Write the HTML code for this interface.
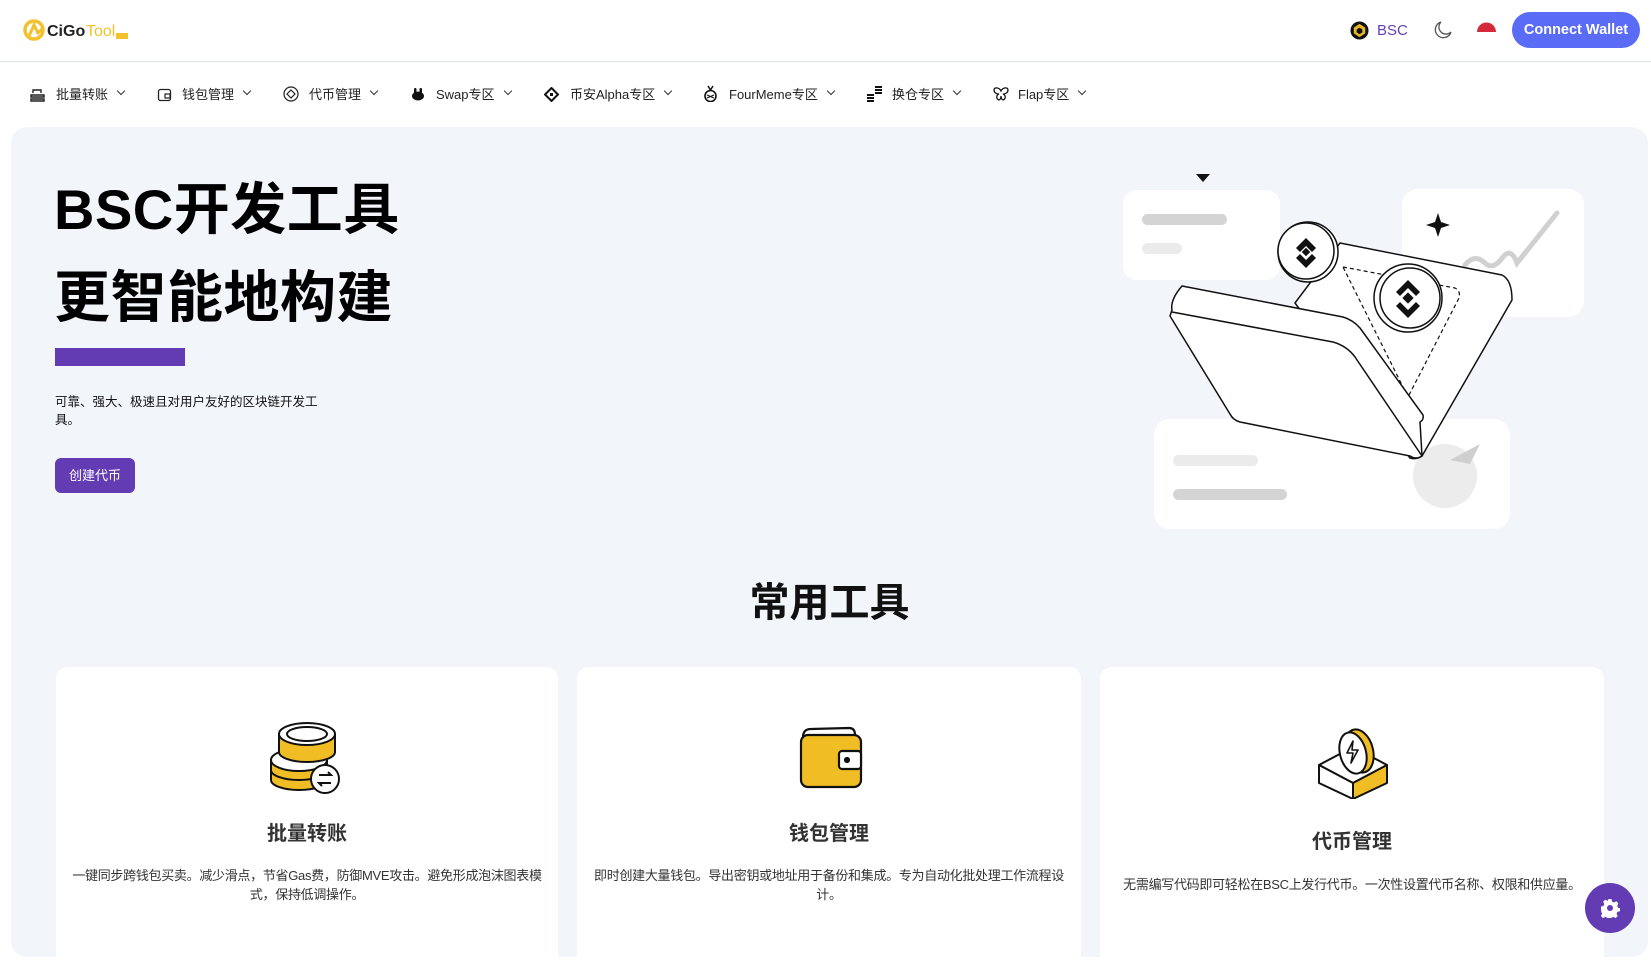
<!DOCTYPE html>
<html><head><meta charset="utf-8"><style>
*{margin:0;padding:0;box-sizing:border-box}
body{width:1651px;height:947px;overflow:hidden;background:#fff;font-family:"Liberation Sans","Noto Sans CJK SC",sans-serif;color:#111;position:relative}
.abs{position:absolute}
.hdr{position:absolute;left:0;top:0;width:1651px;height:62px;border-bottom:1px solid #dfe4ea}
.nav{position:absolute;top:83px;height:20px;display:flex;align-items:center;font-size:13px;color:#222;white-space:nowrap}
.chev{display:inline-block;width:6px;height:6px;border-right:1.3px solid #333;border-bottom:1.3px solid #333;transform:rotate(45deg);margin-left:10px;margin-top:-4px}
.hero{position:absolute;left:11px;top:127px;width:1637px;height:830px;background:#f2f5fa;border-radius:16px}
.card{position:absolute;top:667px;height:300px;background:#fff;border-radius:12px;text-align:center}
.card h3{position:absolute;left:0;right:0;font-size:20px;font-weight:bold;color:#333}
.card p{position:absolute;left:12px;right:12px;font-size:13px;line-height:19px;color:#333;letter-spacing:-0.3px}
</style></head><body>
<div class="hdr"></div>
<svg class="abs" style="left:23px;top:18px" width="110" height="24" viewBox="0 0 110 24">
<circle cx="11" cy="12" r="9" fill="none" stroke="#f2c12e" stroke-width="3.5"/>
<path d="M6 18 L11 7 L15 15 L19 11" fill="none" stroke="#f2c12e" stroke-width="3"/>
<text x="24" y="18" font-family="Liberation Sans" font-size="16" font-weight="bold" fill="#222">CiGo</text>
<text x="63" y="18" font-family="Liberation Sans" font-size="16" fill="#f2c12e">Tool</text>
<rect x="93" y="15" width="12" height="6" fill="#f2c12e"/>
</svg>
<svg class="abs" style="left:1350px;top:21px" width="19" height="19" viewBox="0 0 20 20"><circle cx="10" cy="10" r="9.5" fill="#111"/><path d="M10 3l6 4v6l-6 4-6-4V7z" fill="#e8b923"/><path d="M10 7l3 2v3l-3 2-3-2V9z" fill="#111"/></svg>
<div class="abs" style="left:1377px;top:22px;font-size:15px;color:#6440b8;font-weight:500">BSC</div>
<svg class="abs" style="left:1433px;top:20px" width="20" height="20" viewBox="0 0 20 20"><path d="M8 2a8 8 0 1 0 10 10A7 7 0 0 1 8 2z" fill="none" stroke="#555" stroke-width="1.3"/></svg>
<svg class="abs" style="left:1477px;top:22px" width="19" height="10" viewBox="0 0 19 10"><path d="M0 10a9.5 9.5 0 0 1 19 0z" fill="#d42a3a"/></svg>
<div class="abs" style="left:1512px;top:12px;width:128px;height:36px;border-radius:18px;background:#5a6cf6;color:#fff;font-size:14.5px;font-weight:bold;text-align:center;line-height:37px">Connect Wallet</div>
<div class="nav" style="left:56px">批量转账<span class="chev"></span></div>
<svg class="abs" style="left:30px;top:87px" width="15" height="15" viewBox="0 0 15 15"><path d="M3 6V3h8v3M1 8h13v2H1zM1 12h13v2H1z" fill="none" stroke="#222" stroke-width="1.4"/></svg>
<div class="nav" style="left:182px">钱包管理<span class="chev"></span></div>
<svg class="abs" style="left:157px;top:87px" width="15" height="15" viewBox="0 0 15 15"><rect x="1.5" y="2.5" width="12" height="11" rx="2" fill="none" stroke="#222" stroke-width="1.3"/><rect x="8" y="7" width="5" height="4" fill="none" stroke="#222" stroke-width="1.2"/></svg>
<div class="nav" style="left:309px">代币管理<span class="chev"></span></div>
<svg class="abs" style="left:283px;top:86px" width="16" height="16" viewBox="0 0 16 16"><circle cx="8" cy="8" r="7" fill="none" stroke="#222" stroke-width="1.2"/><path d="M8 4l4 4-4 4-4-4z" fill="none" stroke="#222" stroke-width="1.2"/></svg>
<div class="nav" style="left:436px">Swap专区<span class="chev"></span></div>
<svg class="abs" style="left:411px;top:87px" width="14" height="14" viewBox="0 0 14 14"><ellipse cx="7" cy="9" rx="6" ry="4.5" fill="#111"/><rect x="3" y="1" width="2.5" height="6" rx="1.2" fill="#111"/><rect x="8.5" y="1" width="2.5" height="6" rx="1.2" fill="#111"/></svg>
<div class="nav" style="left:570px">币安Alpha专区<span class="chev"></span></div>
<svg class="abs" style="left:544px;top:87px" width="15" height="15" viewBox="0 0 15 15"><path d="M7.5 1l6.5 6.5-6.5 6.5L1 7.5z" fill="none" stroke="#111" stroke-width="2"/><rect x="6" y="6" width="3" height="3" fill="#111"/></svg>
<div class="nav" style="left:729px">FourMeme专区<span class="chev"></span></div>
<svg class="abs" style="left:704px;top:85px" width="13" height="17" viewBox="0 0 13 17"><path d="M4 1l2.5 4L9 1" fill="none" stroke="#111" stroke-width="1.5"/><ellipse cx="6.5" cy="11" rx="5.5" ry="5.5" fill="none" stroke="#111" stroke-width="1.6"/><path d="M3 10l7 3M3 13l7-3" stroke="#111"/></svg>
<div class="nav" style="left:892px">换仓专区<span class="chev"></span></div>
<svg class="abs" style="left:866px;top:85px" width="17" height="17" viewBox="0 0 17 17"><rect x="1" y="9" width="7" height="2" fill="#111"/><rect x="1" y="12" width="7" height="2" fill="#111"/><rect x="1" y="15" width="7" height="2" fill="#111"/><rect x="9" y="1" width="7" height="2" fill="#111"/><rect x="9" y="4" width="7" height="2" fill="#111"/><rect x="9" y="7" width="7" height="2" fill="#111"/></svg>
<div class="nav" style="left:1018px">Flap专区<span class="chev"></span></div>
<svg class="abs" style="left:993px;top:87px" width="16" height="14" viewBox="0 0 16 14"><path d="M8 4C6 0 1 0 1 3s3 4 5 4c-3 1-3 5 0 6 1 0 2-2 2-4 0 2 1 4 2 4 3-1 3-5 0-6 2 0 5-1 5-4S10 0 8 4z" fill="none" stroke="#111" stroke-width="1.3"/></svg>

<div class="hero"></div>
<div class="abs" style="left:54px;top:166px;font-size:56px;font-weight:bold;line-height:88px;letter-spacing:0.5px;color:#000;white-space:nowrap">BSC开发工具<br>更智能地构建</div>
<div class="abs" style="left:55px;top:348px;width:130px;height:18px;background:#633bb3"></div>
<div class="abs" style="left:55px;top:393px;width:270px;font-size:12.5px;line-height:18px;color:#111">可靠、强大、极速且对用户友好的区块链开发工具。</div>
<div class="abs" style="left:55px;top:458px;width:80px;height:35px;border-radius:6px;background:#633bb3;color:#fff;font-size:13px;text-align:center;line-height:35px">创建代币</div>

<svg class="abs" style="left:1050px;top:150px" width="540" height="380" viewBox="0 0 540 380">
<rect x="73" y="40" width="157" height="90" rx="14" fill="#fff"/>
<rect x="92" y="64" width="85" height="11" rx="5.5" fill="#d4d4d4"/>
<rect x="92" y="93" width="40" height="11" rx="5.5" fill="#ebebeb"/>
<path d="M146 24h14l-7 8z" fill="#111"/>
<rect x="352" y="39" width="182" height="128" rx="16" fill="#fff"/>
<path d="M388 63 l3 9 9 3 -9 3 -3 9 -3 -9 -9 -3 9 -3z" fill="#111"/>
<path d="M415 115 q10-12 20-2 q8 8 18-6 q8-10 14 6 l40-50" fill="none" stroke="#d0d0d0" stroke-width="5" stroke-linecap="round"/>
<rect x="104" y="269" width="356" height="110" rx="16" fill="#fff"/>
<rect x="123" y="305" width="85" height="11" rx="5.5" fill="#ebebeb"/>
<rect x="123" y="339" width="114" height="11" rx="5.5" fill="#d4d4d4"/>
<circle cx="395" cy="326" r="32" fill="#ececec"/>
<path d="M400 310 l30-16 -10 20z" fill="#cfcfcf"/>
<g fill="#fff" stroke="#111" stroke-width="1.5" stroke-linejoin="round">
<path d="M290 93 L452 125 Q462 130 462 150 L372 306 Q366 310 360 308 L245 153 Z"/>
<path d="M293 117 L405 138 Q412 142 408 150 L358 247 Z" fill="none" stroke-dasharray="4 3" stroke-width="1.2"/>
<circle cx="258" cy="102" r="30"/><circle cx="256" cy="101" r="28"/>
<circle cx="358" cy="148" r="34"/><circle cx="360" cy="148" r="30"/>
<path d="M122 160 Q120 150 132 136 L293 167 Q303 170 310 178 L373 265 Q374 270 370 272 L372 306 Q366 310 360 306 L190 272 Q183 270 180 264 L120 166 Z"/>
<path d="M122 162 L283 192 Q297 196 305 207 L372 306" fill="none"/>
</g>
<g fill="#111">
<path d="M256 88l10 10-4 4-6-6-6 6-4-4z"/><rect x="253" y="99" width="6" height="6" transform="rotate(45 256 102)"/><path d="M246 110l4-4 6 6 6-6 4 4-10 10z" transform="translate(0 -2)"/>
<path d="M358 130l12 12-4 4-8-8-8 8-4-4z"/><rect x="354" y="144" width="8" height="8" transform="rotate(45 358 148)"/><path d="M346 156l4-4 8 8 8-8 4 4-12 12z"/>
</g>
</svg>

<div class="abs" style="left:0;width:1651px;top:570px;text-align:center;font-size:40px;font-weight:bold;color:#111;padding-left:8px">常用工具</div>

<div class="card" style="left:56px;width:502px">
<svg class="abs" style="left:213px;top:55px" width="72" height="72" viewBox="0 0 72 72">
<g stroke="#111" stroke-width="2">
<ellipse cx="30" cy="58" rx="28" ry="10" fill="#f0bd24"/><rect x="2" y="38" width="56" height="20" fill="#f0bd24" stroke="none"/>
<ellipse cx="30" cy="38" rx="28" ry="11" fill="#fff"/>
<path d="M2 38v20M58 38v20M2 48a28 10 0 0 0 56 0" fill="none"/>
<ellipse cx="38" cy="30" rx="28" ry="10" fill="#f0bd24"/><rect x="10" y="12" width="56" height="18" fill="#f0bd24" stroke="none"/>
<path d="M10 12v18M66 12v18" fill="none"/>
<ellipse cx="38" cy="12" rx="28" ry="11" fill="#fff"/><ellipse cx="38" cy="12" rx="20" ry="7" fill="#fff"/>
<circle cx="56" cy="57" r="14" fill="#fff"/>
<path d="M50 53h12l-3-3M62 61H50l3 3" fill="none"/>
</g></svg>
<h3 style="top:150px">批量转账</h3>
<p style="top:199px">一键同步跨钱包买卖。减少滑点，节省Gas费，防御MVE攻击。避免形成泡沫图表模式，保持低调操作。</p>
</div>
<div class="card" style="left:577px;width:504px">
<svg class="abs" style="left:222px;top:58px" width="64" height="64" viewBox="0 0 64 64">
<g stroke="#111" stroke-width="2.2">
<path d="M4 12 Q4 4 12 4 L50 3 Q56 3 56 10 L56 14 H4z" fill="#fff"/>
<rect x="2" y="10" width="60" height="52" rx="7" fill="#f0bd24"/>
<rect x="40" y="26" width="22" height="18" rx="3" fill="#fff"/>
<circle cx="48" cy="35" r="2" fill="#111"/>
</g></svg>
<h3 style="top:150px">钱包管理</h3>
<p style="top:199px">即时创建大量钱包。导出密钥或地址用于备份和集成。专为自动化批处理工作流程设计。</p>
</div>
<div class="card" style="left:1100px;width:504px">
<svg class="abs" style="left:217px;top:60px" width="72" height="72" viewBox="0 0 72 72">
<g stroke="#111" stroke-width="2" stroke-linejoin="round">
<path d="M2 38 L36 20 L70 38 L36 56Z" fill="#fff"/>
<path d="M2 38v18l34 16V56z" fill="#fff"/>
<path d="M70 38v18L36 72V56z" fill="#f0bd24"/>
<ellipse cx="42" cy="24" rx="14" ry="22" fill="#f0bd24" transform="rotate(-15 42 24)"/>
<ellipse cx="36" cy="26" rx="13" ry="21" fill="#fff" transform="rotate(-15 36 26)"/>
<path d="M36 14 l-6 12 h6 l-2 10 l7-13 h-6z" fill="none" stroke-width="1.6"/>
</g></svg>
<h3 style="top:158px">代币管理</h3>
<p style="top:208px">无需编写代码即可轻松在BSC上发行代币。一次性设置代币名称、权限和供应量。</p>
</div>

<div class="abs" style="left:1585px;top:883px;width:50px;height:50px;border-radius:50%;background:#633bb3"></div>
<svg class="abs" style="left:1600px;top:898px" width="20" height="20" viewBox="0 0 20 20"><path d="M8.5 1h3l.5 2.5 2 1 2.3-1.2 2.1 2.1L17.2 7.7l.8 2 2 .5v3l-2.5.5-1 2 1.2 2.3-2.1 2.1-2.3-1.2-2 .8-.5 2.5h-3l-.5-2.5-2-.8-2.3 1.2-2.1-2.1 1.2-2.3-.8-2L1 11.5v-3l2.5-.5.8-2L3.1 3.7l2.1-2.1L7.5 2.8l.5-.3z" fill="#fff"/><circle cx="10" cy="10" r="3" fill="#633bb3"/></svg>
</body></html>
